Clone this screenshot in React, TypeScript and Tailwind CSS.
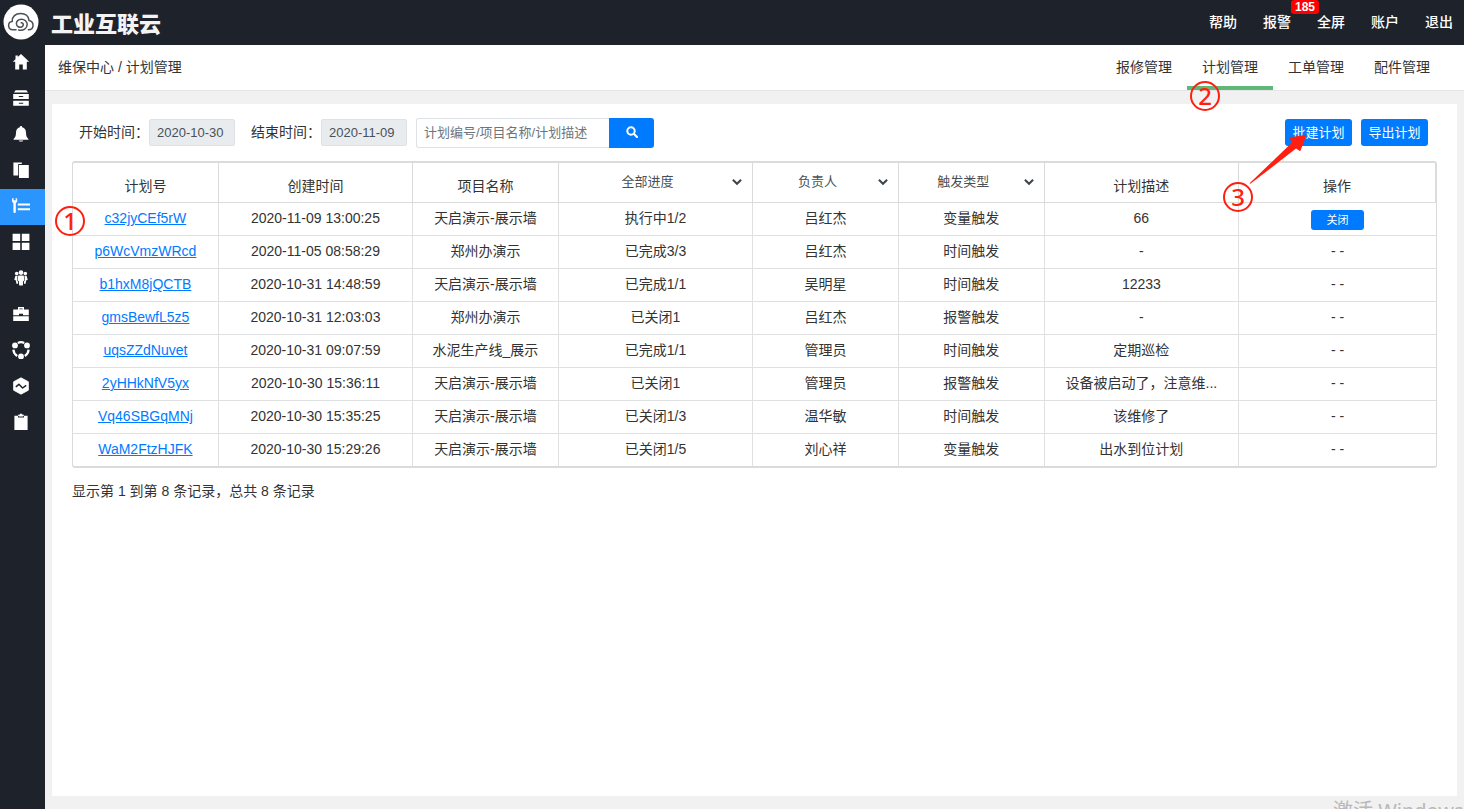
import React from 'react';

const sans = "font-['Liberation_Sans','Noto_Sans_CJK_SC',sans-serif]";

const navIcons: { label: string; art: React.ReactNode }[] = [
  { label: '首页', art: <path d="M9 1 L17.2 8.8 H14.8 V16.5 H10.8 V11.5 H7.2 V16.5 H3.2 V8.8 H0.8 L3.5 6.2 V2.6 H5.8 V4Z" /> },
  {
    label: '档案',
    art: <path fillRule="evenodd" d="M3.6 1.2 H14.4 L16 3.6 H2Z M1.2 5 H16.8 V10 H1.2Z M6.8 7 V8 H11.2 V7Z M1.2 11.7 H16.8 V16.7 H1.2Z M6.8 13.7 V14.7 H11.2 V13.7Z" />,
  },
  {
    label: '报警',
    art: <path d="M9 1 C9.8 1 10.2 1.6 10.2 2.3 C12.8 3 14 5 14 7.8 C14 11 14.8 12.4 16.4 14 V14.8 H1.6 V14 C3.2 12.4 4 11 4 7.8 C4 5 5.2 3 7.8 2.3 C7.8 1.6 8.2 1 9 1Z M6.8 15.4 H11.2 C10.8 17 7.2 17 6.8 15.4Z" />,
  },
  { label: '文档', art: <path d="M1.4 1.5 H9.8 V3 H6.2 V14.6 H1.4Z M7 3.9 H16.8 V17 H7Z" /> },
  {
    label: '维保中心',
    art: (
      <>
        <path d="M0 1.6 L1.5 0.9 V3.2 H3.7 V0.9 L5.2 1.6 V4.6 L3.8 6.2 V14.6 C3.8 16.6 1.4 16.6 1.4 14.6 V6.2 L0 4.6Z" />
        <path d="M5.8 7.6 H18 M5.8 12.2 H18" fill="none" stroke="currentColor" strokeWidth="2" />
      </>
    ),
  },
  { label: '应用', art: <path d="M0.6 0.8 H8.2 V8 H0.6Z M9.8 0.8 H17.4 V8 H9.8Z M0.6 9.8 H8.2 V17 H0.6Z M9.8 9.8 H17.4 V17 H9.8Z" /> },
  {
    label: '人员',
    art: (
      <>
        <circle cx="9" cy="3.6" r="2.3" />
        <circle cx="4.7" cy="4.5" r="1.8" />
        <circle cx="13.3" cy="4.5" r="1.8" />
        <path d="M6.3 6.6 H11.7 L12.6 11.4 L11.2 12 L10.8 16.6 H7.2 L6.8 12 L5.4 11.4Z" />
        <path d="M3.4 6.8 H5.6 L4.9 11.6 L6 12.5 V14.8 H4.4 L3.9 11.4 L2.3 10.8Z M14.6 6.8 H12.4 L13.1 11.6 L12 12.5 V14.8 H13.6 L14.1 11.4 L15.7 10.8Z" />
      </>
    ),
  },
  {
    label: '工具箱',
    art: <path fillRule="evenodd" d="M6 2 H12 V4.6 H16.8 V10.2 H11 V8.8 H7 V10.2 H1.2 V4.6 H6Z M7.4 3.4 V4.2 H10.6 V3.4Z M1.2 11.2 H16.8 V16 H1.2Z" />,
  },
  {
    label: '协同',
    art: (
      <>
        <path d="M5.8 2 Q9 0.4 12.2 2 M16.6 8.6 Q16.4 12.6 12.8 15 M1.4 8.6 Q1.6 12.6 5.2 15" fill="none" stroke="currentColor" strokeWidth="2.2" />
        <circle cx="3" cy="4.4" r="2.9" />
        <circle cx="15" cy="4.4" r="2.9" />
        <circle cx="9" cy="15.4" r="2.9" />
      </>
    ),
  },
  {
    label: '监测',
    art: (
      <>
        <path d="M9 0.8 L16.4 4.8 V13.2 L9 17.2 L1.6 13.2 V4.8Z" strokeLinejoin="round" stroke="currentColor" strokeWidth="0.8" />
        <path d="M3.8 9.8 L6.9 7.3 L10.6 11 L14.2 8.4" fill="none" stroke="#1e222b" strokeWidth="1.5" strokeLinejoin="round" />
      </>
    ),
  },
  { label: '记录', art: <path fillRule="evenodd" d="M2.4 2.8 H6 V1.8 H7.6 L8 0.8 H10 L10.4 1.8 H12 V2.8 H15.6 V17 H2.4Z M6 2.8 V4.4 H12 V2.8 H11.2 V3.6 H6.8 V2.8Z" /> },
];

const topLinks = ['帮助', '报警', '全屏', '账户', '退出'];
const tabs = ['报修管理', '计划管理', '工单管理', '配件管理'];

const rows = [
  ['c32jyCEf5rW', '2020-11-09 13:00:25', '天启演示-展示墙', '执行中1/2', '吕红杰', '变量触发', '66'],
  ['p6WcVmzWRcd', '2020-11-05 08:58:29', '郑州办演示', '已完成3/3', '吕红杰', '时间触发', '-'],
  ['b1hxM8jQCTB', '2020-10-31 14:48:59', '天启演示-展示墙', '已完成1/1', '吴明星', '时间触发', '12233'],
  ['gmsBewfL5z5', '2020-10-31 12:03:03', '郑州办演示', '已关闭1', '吕红杰', '报警触发', '-'],
  ['uqsZZdNuvet', '2020-10-31 09:07:59', '水泥生产线_展示', '已完成1/1', '管理员', '时间触发', '定期巡检'],
  ['2yHHkNfV5yx', '2020-10-30 15:36:11', '天启演示-展示墙', '已关闭1', '管理员', '报警触发', '设备被启动了，注意维...'],
  ['Vq46SBGqMNj', '2020-10-30 15:35:25', '天启演示-展示墙', '已关闭1/3', '温华敏', '时间触发', '该维修了'],
  ['WaM2FtzHJFK', '2020-10-30 15:29:26', '天启演示-展示墙', '已关闭1/5', '刘心祥', '变量触发', '出水到位计划'],
];

function Logo() {
  return (
    <svg className="size-9 shrink-0" viewBox="0 0 36 36" aria-hidden="true">
      <circle cx="18" cy="18" r="17.5" fill="#fff" />
      <g fill="none" stroke="#4b4f57" strokeWidth="1.5" strokeLinecap="round">
        <path d="M13 25.8 H10 C4.4 25.8 4.2 18 9.2 17.4 C9 12.6 12.4 9.4 17.6 9.4 C22.6 9.4 25.6 12.2 26 16.4 C31.6 17.6 31.4 25.8 25.4 25.8" />
        <path d="M15.6 26 C20.4 27 24.2 24.4 24.2 20.6 C24.2 17.4 21.6 15.2 18.4 15.2 C15.2 15.2 13.2 17.4 13.4 19.8 C13.6 22.6 16.4 23.8 18.6 23 C20.8 22.2 21 18.8 18.2 18.8" />
      </g>
    </svg>
  );
}

function HeaderSelect({ label }: { label: string }) {
  return (
    <div className="relative">
      <select
        aria-label={label}
        className="h-[39px] w-full appearance-none bg-transparent pr-6 pb-0.5 pl-2 text-center text-[13px] text-[#495057] [text-align-last:center]"
      >
        <option>{label}</option>
      </select>
      <svg className="pointer-events-none absolute top-[15px] right-2.5 h-2 w-2.5" viewBox="0 0 10 8" aria-hidden="true">
        <path d="M0.9 1.8 L5 5.8 L9.1 1.8" fill="none" stroke="#3d444b" strokeWidth="2" />
      </svg>
    </div>
  );
}

function Marker({ n, place }: { n: number; place: string }) {
  return (
    <span
      className={`pointer-events-none absolute z-10 flex size-[30px] items-center justify-center rounded-full border-2 border-[#ff1f10] font-['Noto_Sans',sans-serif] text-2xl leading-none font-medium text-[#ff1f10] ${place}`}
    >
      {n}
    </span>
  );
}

export default function App() {
  return (
    <div className={`relative flex min-h-screen flex-col bg-[#f1f1f1] text-sm leading-5 text-[#333] ${sans}`}>
      <header className="flex h-[45px] items-center justify-between bg-[#1e222b] pr-[11px] pb-0.5 pl-[3px] text-white">
        <div className="flex items-center gap-3">
          <Logo />
          <h1 className="pt-1.5 text-[22px] leading-7 font-black text-[#f3f3f3]">工业互联云</h1>
        </div>
        <nav className="flex gap-[26px] font-medium">
          {topLinks.map((t) => (
            <a key={t} href="#" className="relative">
              {t}
              {t === '报警' && (
                <span className="absolute -top-3 left-7 flex h-[14px] w-7 items-center justify-center rounded-[3px] bg-[#f00] text-xs leading-none font-bold">
                  185
                </span>
              )}
            </a>
          ))}
        </nav>
      </header>

      <div className="flex flex-1">
        <aside className="w-[45px] shrink-0 bg-[#1e222b] text-white">
          {navIcons.map(({ label, art }) => (
            <a
              key={label}
              href="#"
              aria-label={label}
              className={`flex h-9 items-center justify-center pr-[3px] pb-0.5 ${label === '维保中心' ? 'bg-[#2b95ff]' : ''}`}
            >
              <svg className="size-[18px]" viewBox="0 0 18 18" fill="currentColor" aria-hidden="true">
                {art}
              </svg>
            </a>
          ))}
        </aside>

        <main className="flex min-w-0 flex-1 flex-col">
          <div className="flex h-[46px] items-stretch justify-between border-b border-[#e6e6e6] bg-white pr-[19px] pl-[13px]">
            <div className="flex items-center pb-0.5">维保中心 / 计划管理</div>
            <nav className="flex">
              {tabs.map((t) => (
                <a
                  key={t}
                  href="#"
                  className={`relative flex items-center border-b-4 px-[15px] pt-0.5 ${t === '计划管理' ? 'border-b-[#5fb878]' : 'border-b-transparent'}`}
                >
                  {t}
                  {t === '计划管理' && <Marker n={2} place="left-[3px] top-9" />}
                </a>
              ))}
            </nav>
          </div>

          <section className="mx-[7px] my-[13px] flex-1 bg-white px-5 pt-3.5">
            <div className="flex items-center pr-[9px] pl-[7px]">
              <label htmlFor="start" className="mb-0.5">开始时间：</label>
              <input
                id="start"
                readOnly
                defaultValue="2020-10-30"
                className="mr-4 mb-px h-[27px] w-[86px] rounded-xs border border-[#dee2e6] bg-[#e9ecef] px-[7px] text-[13px] text-[#495057]"
              />
              <label htmlFor="end" className="mb-0.5">结束时间：</label>
              <input
                id="end"
                readOnly
                defaultValue="2020-11-09"
                className="mr-[9px] mb-px h-[27px] w-[86px] rounded-xs border border-[#dee2e6] bg-[#e9ecef] px-[7px] text-[13px] text-[#495057]"
              />
              <input
                aria-label="搜索计划"
                placeholder="计划编号/项目名称/计划描述"
                className="h-[30px] w-[193px] rounded-l-[3px] border border-r-0 border-[#dee2e6] px-[7px] pb-0.5 text-[13px] placeholder:text-[#6c757d]"
              />
              <button aria-label="搜索" className="flex h-[30px] w-[45px] items-center justify-center rounded-r-[3px] bg-[#007bff] pb-0.5">
                <svg className="size-3" viewBox="0 0 12 12" fill="none" stroke="#fff" aria-hidden="true">
                  <circle cx="5" cy="5" r="3.7" strokeWidth="2" />
                  <path d="M7.8 7.8 L11 11" strokeWidth="2.2" strokeLinecap="round" />
                </svg>
              </button>
              <div className="relative mb-px ml-auto flex gap-[9px]">
                <button className="h-[27px] w-[67px] rounded-[3px] bg-[#007bff] text-[13px] text-white">批建计划</button>
                <button className="h-[27px] w-[67px] rounded-[3px] bg-[#007bff] text-[13px] text-white">导出计划</button>
                <svg className="pointer-events-none absolute top-[15px] right-[120px] z-10 h-[50px] w-[60px]" viewBox="0 0 60 50" aria-hidden="true">
                  <path d="M1.6 49.2 L44 8.6 L40.8 3.4 L58.6 0.8 L52.2 17.2 L48 14.6 L2.4 49.8Z" fill="#ff1f10" />
                </svg>
                <Marker n={3} place="right-[175px] top-[63px]" />
              </div>
            </div>

            <div className="relative mt-[13px]">
              <Marker n={1} place="-left-[17px] top-[45px]" />
              <div className="rounded-[3px] border-x border-y-2 border-[#dbdbdb]">
                <table className="w-full table-fixed border-separate border-spacing-0 text-center">
                  <colgroup>
                    <col className="w-[10.7%]" />
                    <col className="w-[14.25%]" />
                    <col className="w-[10.7%]" />
                    <col className="w-[14.25%]" />
                    <col className="w-[10.7%]" />
                    <col className="w-[10.7%]" />
                    <col className="w-[14.25%]" />
                    <col />
                  </colgroup>
                  <thead>
                    <tr className="h-10 [&>th]:border-r [&>th]:border-b [&>th]:border-[#dbdbdb] [&>th]:p-0 [&>th]:font-normal">
                      <th><div className="pt-1.5">计划号</div></th>
                      <th><div className="pt-1.5">创建时间</div></th>
                      <th><div className="pt-1.5">项目名称</div></th>
                      <th><HeaderSelect label="全部进度" /></th>
                      <th><HeaderSelect label="负责人" /></th>
                      <th><HeaderSelect label="触发类型" /></th>
                      <th><div className="pt-1.5">计划描述</div></th>
                      <th><div className="pt-1.5">操作</div></th>
                    </tr>
                  </thead>
                  <tbody>
                    {rows.map((r, i) => (
                      <tr
                        key={r[0]}
                        className="h-[33px] last:h-8 [&>td]:border-r [&>td]:border-b [&>td]:border-[#dee0e2] [&>td]:px-0 [&>td]:pt-0 [&>td]:pb-0.5 [&>td:last-child]:border-r-0 last:[&>td]:border-b-0"
                      >
                        {r.map((c, j) => (
                          <td key={j} className="truncate">
                            {j === 0 ? <a href="#" className="text-[#007bff] underline">{c}</a> : c}
                          </td>
                        ))}
                        <td>
                          {i === 0 ? (
                            <button className="mx-auto mt-1 block h-5 w-[53px] rounded-[3px] bg-[#007bff] text-[11px] leading-5 text-white">关闭</button>
                          ) : (
                            '- -'
                          )}
                        </td>
                      </tr>
                    ))}
                  </tbody>
                </table>
              </div>
            </div>
            <p className="mt-[13px]">显示第 1 到第 8 条记录，总共 8 条记录</p>
          </section>
        </main>
      </div>

      <div className="pointer-events-none absolute right-0 bottom-0 h-3 w-[131px] overflow-hidden font-['Noto_Sans','Noto_Sans_CJK_SC',sans-serif] text-xl leading-7 whitespace-nowrap text-[#b8b8b8]">
        激活 Windows
      </div>
    </div>
  );
}
